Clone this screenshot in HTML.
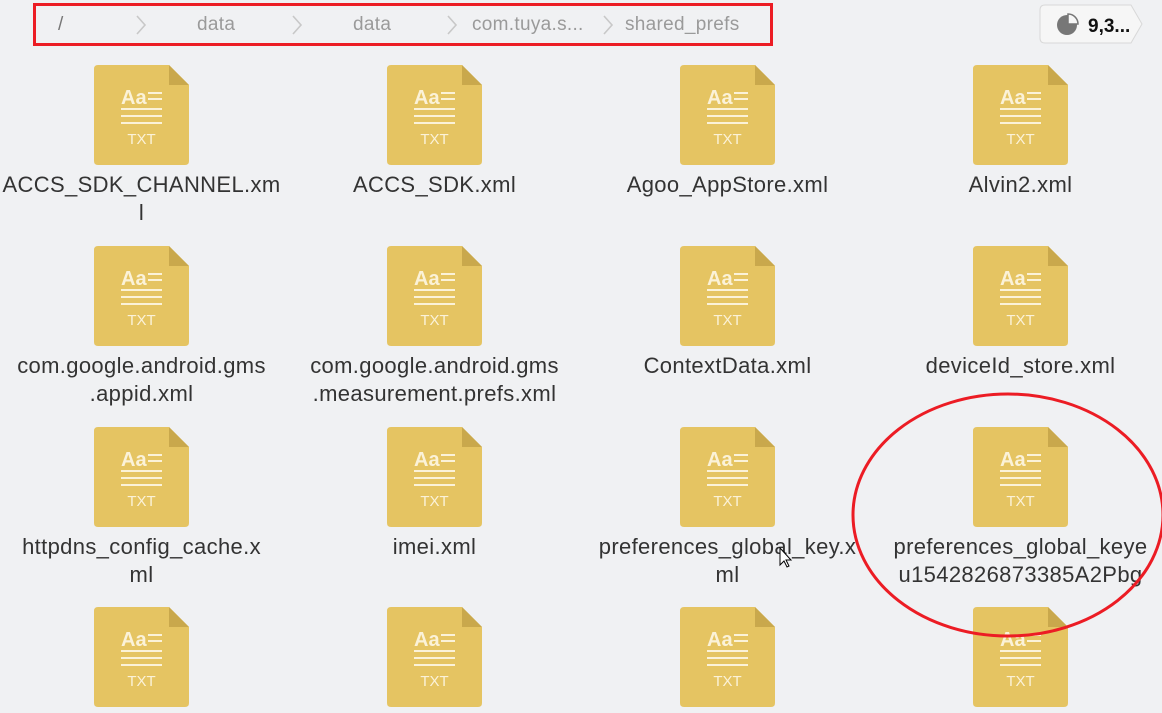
<!DOCTYPE html>
<html><head><meta charset="utf-8"><style>
body{margin:0;width:1162px;height:713px;background:#f0f1f3;position:relative;overflow:hidden;font-family:"Liberation Sans",Roboto,sans-serif;}
.bc{position:absolute;top:14px;font-size:19px;color:#9a9a9a;letter-spacing:0.3px;}
.chev{position:absolute;top:14px;}
.cell{position:absolute;width:293px;text-align:center;}
.cell svg{display:block;margin:0 auto;}
.lbl{margin-top:6px;font-size:22px;color:#333;line-height:28px;white-space:nowrap;letter-spacing:0.35px;}
</style></head><body>
<div class="bc" style="left:58px;color:#777">/</div>
<div class="bc" style="left:197px">data</div>
<div class="bc" style="left:353px">data</div>
<div class="bc" style="left:472px">com.tuya.s...</div>
<div class="bc" style="left:625px">shared_prefs</div>
<svg class="chev" style="left:134px" width="14" height="22"><path d="M3 2 L11 11 L3 20" stroke="#c8c8c8" stroke-width="1.6" fill="none"/></svg>
<svg class="chev" style="left:290px" width="14" height="22"><path d="M3 2 L11 11 L3 20" stroke="#c8c8c8" stroke-width="1.6" fill="none"/></svg>
<svg class="chev" style="left:445px" width="14" height="22"><path d="M3 2 L11 11 L3 20" stroke="#c8c8c8" stroke-width="1.6" fill="none"/></svg>
<svg class="chev" style="left:601px" width="14" height="22"><path d="M3 2 L11 11 L3 20" stroke="#c8c8c8" stroke-width="1.6" fill="none"/></svg>
<div style="position:absolute;left:33px;top:3px;width:734px;height:37px;border:3px solid #ec1c24;"></div>
<svg style="position:absolute;left:1039px;top:4px" width="106" height="42"><path d="M6 1 H92 L103 20 L92 39 H6 Q1 39 1 34 V6 Q1 1 6 1Z" fill="#f6f6f6" stroke="#d8d8d8"/><circle cx="28" cy="21" r="10" fill="#777"/><path d="M29 10 A10 10 0 0 1 39 20 H29Z" fill="#f6f6f6" stroke="#777" stroke-width="1.5"/><text x="49" y="28" font-size="19" font-weight="bold" fill="#111" font-family="Liberation Sans">9,3...</text></svg>
<svg width="0" height="0" style="position:absolute"><defs><g id="ic"><path d="M4 0 H75 L95 20 V96 Q95 100 91 100 H4 Q0 100 0 96 V4 Q0 0 4 0Z" fill="#e5c462"/><path d="M75 0 L95 20 H75Z" fill="#c9a84c"/><text x="27" y="39" font-size="20" font-weight="bold" fill="#fbf2d8" font-family="Liberation Sans">Aa</text><rect x="54" y="27" width="14" height="2" fill="#fbf2d8"/><rect x="54" y="33" width="14" height="2" fill="#fbf2d8"/><rect x="27" y="43" width="41" height="2" fill="#fbf2d8"/><rect x="27" y="50" width="41" height="2" fill="#fbf2d8"/><rect x="27" y="57" width="41" height="2" fill="#fbf2d8"/><text x="47.5" y="79" text-anchor="middle" font-size="15" fill="#fbf2d8" font-family="Liberation Sans">TXT</text></g></defs></svg>
<div class="cell" style="left:-5px;top:65px"><svg width="95" height="100"><use href="#ic"/></svg><div class="lbl">ACCS_SDK_CHANNEL.xm<br>l</div></div>
<div class="cell" style="left:288px;top:65px"><svg width="95" height="100"><use href="#ic"/></svg><div class="lbl">ACCS_SDK.xml</div></div>
<div class="cell" style="left:581px;top:65px"><svg width="95" height="100"><use href="#ic"/></svg><div class="lbl">Agoo_AppStore.xml</div></div>
<div class="cell" style="left:874px;top:65px"><svg width="95" height="100"><use href="#ic"/></svg><div class="lbl">Alvin2.xml</div></div>
<div class="cell" style="left:-5px;top:246px"><svg width="95" height="100"><use href="#ic"/></svg><div class="lbl">com.google.android.gms<br>.appid.xml</div></div>
<div class="cell" style="left:288px;top:246px"><svg width="95" height="100"><use href="#ic"/></svg><div class="lbl">com.google.android.gms<br>.measurement.prefs.xml</div></div>
<div class="cell" style="left:581px;top:246px"><svg width="95" height="100"><use href="#ic"/></svg><div class="lbl">ContextData.xml</div></div>
<div class="cell" style="left:874px;top:246px"><svg width="95" height="100"><use href="#ic"/></svg><div class="lbl">deviceId_store.xml</div></div>
<div class="cell" style="left:-5px;top:427px"><svg width="95" height="100"><use href="#ic"/></svg><div class="lbl">httpdns_config_cache.x<br>ml</div></div>
<div class="cell" style="left:288px;top:427px"><svg width="95" height="100"><use href="#ic"/></svg><div class="lbl">imei.xml</div></div>
<div class="cell" style="left:581px;top:427px"><svg width="95" height="100"><use href="#ic"/></svg><div class="lbl">preferences_global_key.x<br>ml</div></div>
<div class="cell" style="left:874px;top:427px"><svg width="95" height="100"><use href="#ic"/></svg><div class="lbl">preferences_global_keye<br>u1542826873385A2Pbg</div></div>
<div class="cell" style="left:-5px;top:607px"><svg width="95" height="100"><use href="#ic"/></svg></div>
<div class="cell" style="left:288px;top:607px"><svg width="95" height="100"><use href="#ic"/></svg></div>
<div class="cell" style="left:581px;top:607px"><svg width="95" height="100"><use href="#ic"/></svg></div>
<div class="cell" style="left:874px;top:607px"><svg width="95" height="100"><use href="#ic"/></svg></div>
<svg style="position:absolute;left:0;top:0" width="1162" height="713"><ellipse cx="1008" cy="515" rx="155" ry="121" fill="none" stroke="#ec1c24" stroke-width="3"/><path d="M780 548 V565 L784 561 L787 567 L789 566 L786 560 L791 560Z" fill="#fff" stroke="#000" stroke-width="1"/></svg>
</body></html>
